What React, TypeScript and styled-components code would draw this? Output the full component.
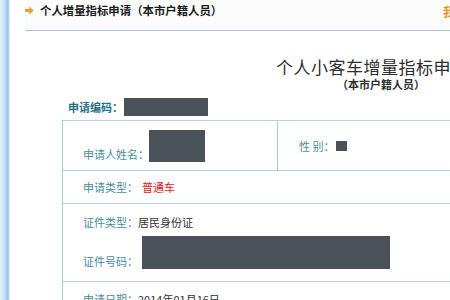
import React from "react";
import styled, { createGlobalStyle } from "styled-components";

const Global = createGlobalStyle`
  html, body { margin: 0; padding: 0; background: #ffffff; overflow: hidden; }
  body { font-family: "Noto Sans CJK SC", "Noto Sans", sans-serif; width: 450px; height: 300px; }
`;

const Page = styled.div`
  display: flex;
  width: 450px;
  height: 300px;
  overflow: hidden;
`;

const SideStrip = styled.div`
  flex: 0 0 10px;
  background: linear-gradient(to right, #e6f2fb 0%, #c8e2f5 45%, #8cc6ec 80%, #f4f9fd 100%);
`;

const Main = styled.div`
  flex: 1 0 auto;
  display: block;
  min-width: 0;
`;

const Header = styled.div`
  margin-left: 15px;
  padding-top: 3px;
  box-sizing: border-box;
  height: 31px;
  border-bottom: 1.5px solid #a6c7d8;
  display: flex;
  align-items: flex-start;
  background: #fcfcfc;
  white-space: nowrap;
`;

const HeaderTitle = styled.div`
  flex: 0 0 418px;
  display: flex;
  align-items: center;
  gap: 6px;
  font-size: 11.4px;
  line-height: 14px;
  font-weight: 700;
  color: #1b1b1b;
`;

const HeaderLink = styled.div`
  flex: 0 0 auto;
  font-size: 12px;
  line-height: 18px;
  color: #e8912c;
  font-weight: 700;
`;

const Content = styled.div`
  margin-left: 52px;
  width: 638px;
  display: flex;
  flex-direction: column;
  & > * { flex-shrink: 0; }
`;

const BigTitle = styled.div`
  margin-top: 26px;
  text-align: center;
  font-size: 17px;
  line-height: 20px;
  letter-spacing: 0.5px;
  color: #2e2e2e;
  white-space: nowrap;
`;

const SubTitle = styled.div`
  margin-top: 1px;
  text-align: center;
  font-size: 11px;
  line-height: 12px;
  font-weight: 700;
  color: #2e2e2e;
`;

const CodeRow = styled.div`
  margin-top: 8px;
  margin-left: 6px;
  height: 18px;
  display: flex;
  align-items: center;
  gap: 1px;
`;

const CodeLabel = styled.span`
  font-size: 11px;
  font-weight: 700;
  color: #1f6f86;
`;

const Redact = styled.div<{ $w: number; $h: number }>`
  flex: 0 0 auto;
  width: ${(p) => p.$w}px;
  height: ${(p) => p.$h}px;
  background: #4a5159;
`;

const Table = styled.div`
  margin-top: 4px;
  border-left: 1px solid #a9ccd2;
  display: flex;
  flex-direction: column;
  & > * { flex-shrink: 0; }
`;

const Row = styled.div<{ $h: number }>`
  border-top: 1.5px solid #b4d4d8;
  height: ${(p) => p.$h}px;
  box-sizing: border-box;
  display: flex;
`;

const Cell = styled.div<{ $w?: number; $align?: string; $pb?: number }>`
  ${(p) => (p.$w ? `flex: 0 0 ${p.$w}px;` : "flex: 1 1 auto;")}
  box-sizing: border-box;
  padding-left: 20px;
  padding-bottom: ${(p) => p.$pb ?? 0}px;
  display: flex;
  align-items: ${(p) => p.$align ?? "center"};
  & + & {
    border-left: 1px solid #a9ccd2;
    padding-left: 21px;
  }
`;

const StackCell = styled.div`
  flex: 1 1 auto;
  padding: 10px 0 12px 20px;
  display: flex;
  flex-direction: column;
  gap: 6px;
`;

const Line = styled.div`
  display: flex;
  align-items: flex-end;
`;

const Label = styled.span`
  font-size: 11px;
  line-height: 16px;
  color: #4a8c9d;
  white-space: nowrap;
`;

const Value = styled.span<{ $red?: boolean; $gap?: number }>`
  font-size: 11px;
  line-height: 16px;
  color: ${(p) => (p.$red ? "#e3151b" : "#333333")};
  margin-left: ${(p) => p.$gap ?? 0}px;
  white-space: nowrap;
`;

const Gap = styled.span<{ $w: number }>`
  display: inline-block;
  width: ${(p) => p.$w}px;
`;

const TopRow = styled.div`
  padding-top: 9px;
  padding-left: 20px;
  border-top: 1.5px solid #b4d4d8;
  display: flex;
`;

const Arrow = () => (
  <svg width="9" height="9" viewBox="0 0 9 9">
    <path d="M0 3 H4.2 V0.5 L8.8 4.5 L4.2 8.5 V6 H0 Z" fill="#f39a2f" />
  </svg>
);

export default function App() {
  return (
    <>
      <Global />
      <Page>
        <SideStrip />
        <Main>
          <Header>
            <HeaderTitle>
              <Arrow />
              <span>个人增量指标申请（本市户籍人员）</span>
            </HeaderTitle>
            <HeaderLink>我的申请</HeaderLink>
          </Header>
          <Content>
            <BigTitle>个人小客车增量指标申请表</BigTitle>
            <SubTitle>（本市户籍人员）</SubTitle>
            <CodeRow>
              <CodeLabel>申请编码：</CodeLabel>
              <Redact $w={84} $h={18} />
            </CodeRow>
            <Table>
              <Row $h={50}>
                <Cell $w={214} $align="flex-end" $pb={8}>
                  <Label>申请人姓名：</Label>
                  <Redact $w={56} $h={32} />
                </Cell>
                <Cell $align="center">
                  <Label>性 别：</Label>
                  <Gap $w={2} />
                  <Redact $w={11} $h={10} />
                </Cell>
              </Row>
              <Row $h={33}>
                <Cell $align="center">
                  <Label>申请类型：</Label>
                  <Value $red $gap={4}>普通车</Value>
                </Cell>
              </Row>
              <Row $h={78}>
                <StackCell>
                  <Line>
                    <Label>证件类型：</Label>
                    <Value>居民身份证</Value>
                  </Line>
                  <Line>
                    <Label>证件号码：</Label>
                    <Gap $w={4} />
                    <Redact $w={248} $h={33} />
                  </Line>
                </StackCell>
              </Row>
              <TopRow>
                <Label>申请日期：</Label>
                <Value>2014年01月16日</Value>
              </TopRow>
            </Table>
          </Content>
        </Main>
      </Page>
    </>
  );
}
